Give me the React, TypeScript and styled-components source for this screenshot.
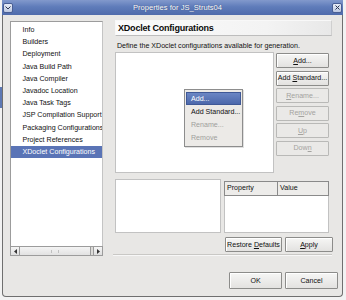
import React from "react";
import styled, { createGlobalStyle } from "styled-components";

const GlobalStyle = createGlobalStyle`
  html, body {
    margin: 0;
    padding: 0;
    background: #f2f2f2;
    font-family: "Liberation Sans", Arial, sans-serif;
    font-size: 7.1px;
    color: #111;
  }
`;

const treeItems = [
  "Info",
  "Builders",
  "Deployment",
  "Java Build Path",
  "Java Compiler",
  "Javadoc Location",
  "Java Task Tags",
  "JSP Compilation Support",
  "Packaging Configurations",
  "Project References",
  "XDoclet Configurations",
];

// label with the mnemonic letter index
const sideButtons: { label: string; key: number; disabled?: boolean }[] = [
  { label: "Add...", key: 0 },
  { label: "Add Standard...", key: 4 },
  { label: "Rename...", key: 0, disabled: true },
  { label: "Remove", key: 2, disabled: true },
  { label: "Up", key: 0, disabled: true },
  { label: "Down", key: 3, disabled: true },
];

const menuItems = [
  { label: "Add...", selected: true },
  { label: "Add Standard..." },
  { label: "Rename...", disabled: true },
  { label: "Remove", disabled: true },
];

const Mnemonic: React.FC<{ text: string; at?: number }> = ({ text, at }) => {
  if (at === undefined || at < 0) return <span>{text}</span>;
  return (
    <span>
      {text.slice(0, at)}
      <u>{text[at]}</u>
      {text.slice(at + 1)}
    </span>
  );
};

const App: React.FC = () => {
  return (
    <>
      <GlobalStyle />
      <Desktop>
        <EdgeStrip>
          <BehindTab />
        </EdgeStrip>
        <Window>
          <TitleBar>
            <TitleIcon>
              <svg width="6" height="4" viewBox="0 0 6 4">
                <path d="M0.5 0.5 L3 3 L5.5 0.5" stroke="#2b3550" strokeWidth="1" fill="none" />
              </svg>
            </TitleIcon>
            <Title>Properties for JS_Struts04</Title>
            <TitleIcon>
              <svg width="5" height="5" viewBox="0 0 5 5">
                <path d="M0.5 0.5 L4.5 4.5 M4.5 0.5 L0.5 4.5" stroke="#2b3550" strokeWidth="1" />
              </svg>
            </TitleIcon>
          </TitleBar>

          <Body>
            <TreeColumn>
              <Tree>
                {treeItems.map((item, i) => (
                  <TreeRow key={item} $selected={i === treeItems.length - 1}>
                    {item}
                  </TreeRow>
                ))}
              </Tree>
              <HScroll>
                <ScrollArrow>
                  <svg width="3" height="5" viewBox="0 0 3 5">
                    <path d="M3 0 L0 2.5 L3 5 Z" fill="#333" />
                  </svg>
                </ScrollArrow>
                <ScrollThumb>
                  <Grip />
                </ScrollThumb>
                <ScrollGap />
                <ScrollArrow>
                  <svg width="3" height="5" viewBox="0 0 3 5">
                    <path d="M0 0 L3 2.5 L0 5 Z" fill="#333" />
                  </svg>
                </ScrollArrow>
              </HScroll>
            </TreeColumn>

            <PageColumn>
              <PageHeader>XDoclet Configurations</PageHeader>
              <Description>
                Define the XDoclet configurations available for generation.
              </Description>

              <ListArea>
                <ConfigList>
                  <ContextMenu>
                    {menuItems.map((m) => (
                      <MenuItem
                        key={m.label}
                        $selected={m.selected}
                        $disabled={m.disabled}
                      >
                        {m.label}
                      </MenuItem>
                    ))}
                  </ContextMenu>
                </ConfigList>
                <ButtonStack>
                  {sideButtons.map((b) => (
                    <DialogButton key={b.label} $disabled={b.disabled}>
                      <Mnemonic text={b.label} at={b.key} />
                    </DialogButton>
                  ))}
                </ButtonStack>
              </ListArea>

              <DetailArea>
                <DetailBox />
                <PropertyTable>
                  <TableHead>
                    <HeadCell $w={52}>Property</HeadCell>
                    <HeadCell>Value</HeadCell>
                  </TableHead>
                </PropertyTable>
              </DetailArea>

              <ApplyRow>
                <DialogButton $w={57}>
                  <Mnemonic text="Restore Defaults" at={8} />
                </DialogButton>
                <DialogButton $w={48}>
                  <Mnemonic text="Apply" at={0} />
                </DialogButton>
              </ApplyRow>
              <Separator />
            </PageColumn>
          </Body>

          <FooterRow>
            <DialogButton $w={53} $h={17}>
              <span>OK</span>
            </DialogButton>
            <DialogButton $w={53} $h={17}>
              <span>Cancel</span>
            </DialogButton>
          </FooterRow>
        </Window>
      </Desktop>
    </>
  );
};

export default App;

const Desktop = styled.div`
  display: flex;
  width: 346px;
  height: 300px;
`;

const EdgeStrip = styled.div`
  width: 2px;
  flex-shrink: 0;
`;

const BehindTab = styled.div`
  margin-top: 87px;
  width: 3px;
  height: 21px;
  background: #5d78b4;
`;

const Window = styled.div`
  width: 341px;
  height: 297px;
  box-sizing: border-box;
  display: flex;
  flex-direction: column;
  background: #e8e7e5;
  border: 1px solid #6f6f6f;
  border-top: none;
  border-radius: 0 0 4px 4px;
  position: relative;
  z-index: 1;
`;

const TitleBar = styled.div`
  height: 15px;
  margin: 0 -1px;
  display: flex;
  align-items: center;
  padding: 0 1px 0 1px;
  background: linear-gradient(#8299cc 0%, #5f7cba 45%, #4f6bab 100%);
  color: #fff;
`;

const TitleIcon = styled.div`
  width: 10px;
  height: 10px;
  box-sizing: border-box;
  border: 1px solid #4a5f94;
  border-radius: 2px;
  background: linear-gradient(#e8edf7, #bcc8e2);
  display: flex;
  align-items: center;
  justify-content: center;
`;

const Title = styled.div`
  flex: 1;
  text-align: center;
  font-size: 7.6px;
  padding-left: 10px;
  text-shadow: 0 0 1px rgba(30, 40, 80, 0.7);
`;

const Body = styled.div`
  display: flex;
  padding: 5px 0 0 7px;
`;

const TreeColumn = styled.div`
  width: 93px;
  margin-top: 1px;
  display: flex;
  flex-direction: column;
`;

const Tree = styled.div`
  height: 225px;
  box-sizing: border-box;
  border: 1px solid #9c9c9c;
  border-right-color: #c4c4c4;
  border-bottom: none;
  background: #fff;
  padding-top: 2px;
  overflow: hidden;
`;

const TreeRow = styled.div<{ $selected?: boolean }>`
  height: 12.2px;
  line-height: 12.2px;
  padding-left: 11.5px;
  white-space: nowrap;
  overflow: hidden;
  background: ${(p) => (p.$selected ? "#5a74b6" : "transparent")};
  color: ${(p) => (p.$selected ? "#fff" : "#111")};
`;

const HScroll = styled.div`
  height: 10px;
  display: flex;
  align-items: stretch;
  background: #dcdbd8;
  border: 1px solid #9c9c9c;
  box-sizing: border-box;
`;

const ScrollArrow = styled.div`
  width: 8px;
  display: flex;
  align-items: center;
  justify-content: center;
  background: linear-gradient(#f6f6f6, #dedede);
  border-right: 1px solid #9a9a9a;
  &:last-child {
    border-right: none;
    border-left: 1px solid #9a9a9a;
  }
`;

const ScrollThumb = styled.div`
  width: 70px;
  display: flex;
  align-items: center;
  justify-content: center;
  background: linear-gradient(#f4f4f4, #e2e2e2);
  border-right: 1px solid #9a9a9a;
`;

const Grip = styled.div`
  width: 6px;
  height: 3px;
  border-left: 1px solid #c0c0c0;
  border-right: 1px solid #c0c0c0;
`;

const ScrollGap = styled.div`
  flex: 1;
`;

const PageColumn = styled.div`
  width: 217px;
  margin-left: 12px;
  display: flex;
  flex-direction: column;
`;

const PageHeader = styled.div`
  height: 16px;
  box-sizing: border-box;
  line-height: 15px;
  padding-left: 2px;
  font-size: 9px;
  font-weight: bold;
  letter-spacing: -0.2px;
  color: #0a0a0a;
  background: linear-gradient(90deg, #fbfbfb 0%, #f3f3f3 70%, #e8e8e8 100%);
  border: 1px solid #f8f8f8;
  border-bottom-color: #bdbdbd;
  border-right-color: #cfcfcf;
`;

const Description = styled.div`
  margin-top: 5px;
  height: 10px;
  line-height: 10px;
  padding-left: 2px;
  white-space: nowrap;
`;

const ListArea = styled.div`
  margin-top: 1px;
  display: flex;
  gap: 2px;
  height: 121px;
`;

const ConfigList = styled.div`
  width: 159px;
  box-sizing: border-box;
  background: #fff;
  border: 1px solid #c2c2c2;
  position: relative;
`;

const ContextMenu = styled.div`
  position: absolute;
  left: 68px;
  top: 36px;
  width: 59px;
  box-sizing: border-box;
  padding: 2px 1px;
  background: #eceae7;
  border: 1px solid #8d8d8d;
  box-shadow: 1px 1px 0 rgba(0, 0, 0, 0.12);
`;

const MenuItem = styled.div<{ $selected?: boolean; $disabled?: boolean }>`
  height: 13px;
  line-height: 12px;
  padding-left: 4px;
  white-space: nowrap;
  color: ${(p) => (p.$selected ? "#fff" : p.$disabled ? "#a09f9c" : "#111")};
  background: ${(p) =>
    p.$selected ? "linear-gradient(#6b86c4, #4c68ab)" : "transparent"};
  border: 1px solid ${(p) => (p.$selected ? "#3f5896" : "transparent")};
  box-sizing: border-box;
`;

const ButtonStack = styled.div`
  width: 53px;
  padding-top: 1px;
  display: flex;
  flex-direction: column;
  gap: 2.6px;
`;

const DialogButton = styled.div<{ $disabled?: boolean; $w?: number; $h?: number }>`
  width: ${(p) => (p.$w ? `${p.$w}px` : "auto")};
  height: ${(p) => p.$h ?? 15}px;
  box-sizing: border-box;
  display: flex;
  align-items: center;
  justify-content: center;
  white-space: nowrap;
  border: 1px solid ${(p) => (p.$disabled ? "#b9b9b7" : "#8c8c8a")};
  border-radius: 1px;
  background: ${(p) =>
    p.$disabled ? "#eae9e7" : "linear-gradient(#f6f6f5, #e3e2e0)"};
  color: ${(p) => (p.$disabled ? "#a4a3a0" : "#111")};
  box-shadow: ${(p) => (p.$disabled ? "none" : "inset 1px 1px 0 #fff")};

  u {
    text-decoration-thickness: 1px;
    text-underline-offset: 1px;
  }
`;

const DetailArea = styled.div`
  margin-top: 6px;
  height: 54px;
  display: flex;
  gap: 3px;
`;

const DetailBox = styled.div`
  width: 106px;
  box-sizing: border-box;
  background: #fff;
  border: 1px solid #c2c2c2;
`;

const PropertyTable = styled.div`
  width: 105px;
  box-sizing: border-box;
  background: #fff;
  border: 1px solid #c2c2c2;
  margin-top: 2px;
`;

const TableHead = styled.div`
  display: flex;
  height: 13px;
  border: 1px solid #8a8a8a;
  margin: -1px;
  background: #edecea;
`;

const HeadCell = styled.div<{ $w?: number }>`
  width: ${(p) => (p.$w ? `${p.$w}px` : "auto")};
  flex: ${(p) => (p.$w ? "none" : "1")};
  line-height: 12px;
  padding-left: 2px;
  box-sizing: border-box;
  & + & {
    border-left: 1px solid #8a8a8a;
  }
`;

const ApplyRow = styled.div`
  margin-top: 4px;
  display: flex;
  justify-content: flex-end;
  gap: 3px;
  margin-right: -1px;
`;

const Separator = styled.div`
  margin: 2px 0 0 -2px;
  height: 1px;
  background: #c9c8c5;
  border-bottom: 1px solid #f7f7f7;
`;

const FooterRow = styled.div`
  margin-top: 16px;
  display: flex;
  justify-content: flex-end;
  gap: 3px;
  padding-right: 4px;
`;
